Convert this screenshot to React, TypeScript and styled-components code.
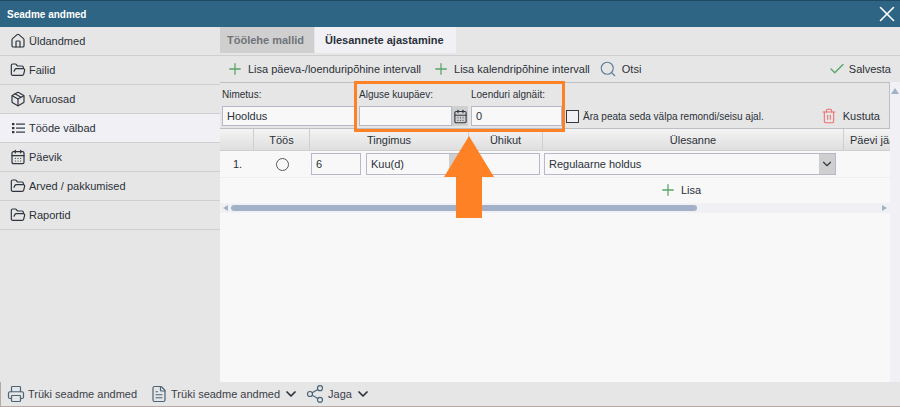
import React from 'react';
import styled, { createGlobalStyle } from 'styled-components';
import { CalendarDays, Check, ChevronDown, FileText, FolderOpen, House, Package, Plus, Printer, Search, Share2, Trash2, X } from 'lucide-react';

const GlobalStyle = createGlobalStyle`
  html, body { margin: 0; padding: 0; height: 100%; overflow: hidden; }
  body { font-family: "Liberation Sans", Arial, sans-serif; font-size: 11px; color: #2b3138; }
  * { box-sizing: border-box; }
`;

const ListIcon = ({ size }: { size: number; color?: string; strokeWidth?: number }) => (
  <svg width={size} height={size} viewBox='0 0 16 16' fill='#2f3640'>
    <rect x='2' y='3' width='2.4' height='2.2' />
    <rect x='2' y='7' width='2.4' height='2.2' />
    <rect x='2' y='11' width='2.4' height='2.2' />
    <rect x='6' y='3.5' width='9' height='1.2' />
    <rect x='6' y='7.5' width='9' height='1.2' />
    <rect x='6' y='11.5' width='9' height='1.2' />
  </svg>
);

const aMenu = [
  { sName: 'Üldandmed', oIcon: House },
  { sName: 'Failid', oIcon: FolderOpen },
  { sName: 'Varuosad', oIcon: Package },
  { sName: 'Tööde välbad', oIcon: ListIcon, bActive: true },
  { sName: 'Päevik', oIcon: CalendarDays },
  { sName: 'Arved / pakkumised', oIcon: FolderOpen },
  { sName: 'Raportid', oIcon: FolderOpen },
];

const App = () => {
  return (
    <Page>
      <GlobalStyle />
      <Header>
        <HeaderTitle>Seadme andmed</HeaderTitle>
        <X size={26} color='#ffffff' strokeWidth={1.5} />
      </Header>

      <Body>
        <Sidebar>
          {aMenu.map((oItem) => (
            <MenuItem key={oItem.sName} $active={oItem.bActive}>
              <oItem.oIcon size={16} color='#2f3640' strokeWidth={1.8} />
              {oItem.sName}
            </MenuItem>
          ))}
        </Sidebar>

        <Main>
          <Tabs>
            <Tab>Töölehe mallid</Tab>
            <Tab $active>Ülesannete ajastamine</Tab>
          </Tabs>

          <Toolbar>
            <ToolButton $spaced>
              <Plus size={18} color='#5aa469' strokeWidth={1.7} />
              Lisa päeva-/loenduripõhine intervall
            </ToolButton>
            <ToolButton>
              <Plus size={18} color='#5aa469' strokeWidth={1.7} />
              Lisa kalendripõhine intervall
            </ToolButton>
            <SearchButton>
              <Search size={18} color='#5f7f96' strokeWidth={1.5} />
              Otsi
            </SearchButton>
            <SaveButton>
              <Check size={18} color='#5aa469' strokeWidth={1.8} />
              Salvesta
            </SaveButton>
          </Toolbar>

          <Content>
            <ScrollArea>
              <FormPanel>
                <Field $width={134}>
                  <Label>Nimetus:</Label>
                  <Input>Hooldus</Input>
                </Field>
                <Field $width={109}>
                  <Label>Alguse kuupäev:</Label>
                  <DateInput>
                    <Input $grow />
                    <DateButton>
                      <CalendarDays size={15} color='#333a42' strokeWidth={1.8} />
                    </DateButton>
                  </DateInput>
                </Field>
                <Field $width={91}>
                  <Label>Loenduri algnäit:</Label>
                  <Input>0</Input>
                </Field>
                <CheckRow>
                  <CheckBox />
                  Ära peata seda välpa remondi/seisu ajal.
                </CheckRow>
                <DeleteButton>
                  <Trash2 size={16} color='#ee7070' strokeWidth={1.6} />
                  Kustuta
                </DeleteButton>
              </FormPanel>

              <TableClip>
                <HeadRow>
                  <HeadCell />
                  <HeadCell>Töös</HeadCell>
                  <HeadCell>Tingimus</HeadCell>
                  <HeadCell>Ühikut</HeadCell>
                  <HeadCell>Ülesanne</HeadCell>
                  <HeadCell $clip>Päevi jäänud</HeadCell>
                </HeadRow>
                <DataRow>
                  <RowNumber>1.</RowNumber>
                  <Cell>
                    <Radio />
                  </Cell>
                  <ConditionCell>
                    <CellInput $width={50}>6</CellInput>
                    <UnitSelect>
                      Kuu(d)
                      <SelectArrow />
                    </UnitSelect>
                  </ConditionCell>
                  <Cell>
                    <CellInput $width={68} />
                  </Cell>
                  <TaskCell>
                    <TaskSelect>
                      Regulaarne holdus
                      <SelectArrow>
                        <ChevronDown size={14} color='#333a42' strokeWidth={2} />
                      </SelectArrow>
                    </TaskSelect>
                  </TaskCell>
                  <Cell />
                </DataRow>
                <AddRow>
                  <Plus size={18} color='#5aa469' strokeWidth={1.7} />
                  Lisa
                </AddRow>
                <HScroll>
                  <ArrowLeft />
                  <HThumb />
                  <ArrowRight />
                </HScroll>
              </TableClip>
            </ScrollArea>
            <VScroll>
              <ArrowUp />
            </VScroll>
          </Content>
        </Main>
      </Body>

      <Footer>
        <FooterButton $spaced>
          <Printer size={18} color='#4a6478' strokeWidth={1.6} />
          Trüki seadme andmed
        </FooterButton>
        <FooterButton>
          <FileText size={18} color='#4a6478' strokeWidth={1.6} />
          Trüki seadme andmed
          <ChevronDown size={16} color='#2b3138' strokeWidth={2.6} />
        </FooterButton>
        <FooterButton>
          <Share2 size={20} color='#4a6478' strokeWidth={1.4} />
          Jaga
          <ChevronDown size={16} color='#2b3138' strokeWidth={2.6} />
        </FooterButton>
      </Footer>

      <Highlight />
      <BigArrow viewBox='0 0 50 82'>
        <polygon points='25,0 50,41 38,41 38,82 12,82 12,41 0,41' fill='#ff8125' />
      </BigArrow>
    </Page>
  );
};

const Page = styled.div`
  width: 900px;
  height: 407px;
  position: relative;
  display: flex;
  flex-direction: column;
  overflow: hidden;
  background: #e6e6e6;
`;

const Header = styled.div`
  height: 27px;
  flex: none;
  display: flex;
  align-items: center;
  justify-content: space-between;
  padding-left: 7px;
  background: #2e6484;
  border-top: 1px solid #20485f;
`;

const HeaderTitle = styled.div`
  font-size: 10px;
  font-weight: 700;
  color: #ffffff;
`;

const Body = styled.div`
  flex: 1;
  min-height: 0;
  display: flex;
`;

const Sidebar = styled.div`
  width: 220px;
  flex: none;
  background: #e6e6e6;
`;

const MenuItem = styled.div<{ $active?: boolean }>`
  height: 29px;
  display: flex;
  align-items: center;
  gap: 3px;
  padding-left: 10px;
  font-size: 11px;
  color: #2b3138;
  background: ${(props) => (props.$active ? '#f0f0f5' : '#e6e6e6')};
  border-bottom: 1px solid #cfcfcf;
`;

const Main = styled.div`
  flex: 1;
  min-width: 0;
  display: flex;
  flex-direction: column;
  background: #f8f8f8;
`;

const Tabs = styled.div`
  height: 29px;
  flex: none;
  display: flex;
  gap: 1px;
  padding-bottom: 2px;
  background: #e6e6e6;
  border-bottom: 1px solid #cfcfcf;
`;

const Tab = styled.div<{ $active?: boolean }>`
  display: flex;
  align-items: center;
  padding-left: ${(props) => (props.$active ? '10px' : '7px')};
  width: ${(props) => (props.$active ? '141px' : '94px')};
  font-size: 11px;
  font-weight: 700;
  white-space: nowrap;
  color: ${(props) => (props.$active ? '#2b3138' : '#707478')};
  background: ${(props) => (props.$active ? '#f0f0f5' : '#cfcfcf')};
`;

const Toolbar = styled.div`
  height: 26px;
  flex: none;
  display: flex;
  align-items: center;
  gap: 9px;
  padding: 0 9px 0 6px;
  background: #e6e6e6;
`;

const ToolButton = styled.div<{ $spaced?: boolean }>`
  display: flex;
  align-items: center;
  gap: 4px;
  margin-right: ${(props) => (props.$spaced ? '2px' : '0')};
  font-size: 11px;
  white-space: nowrap;
`;

const SearchButton = styled(ToolButton)`
  gap: 5px;
`;

const SaveButton = styled(ToolButton)`
  margin-left: auto;
  gap: 3px;
`;

const Content = styled.div`
  flex: 1;
  min-height: 0;
  display: flex;
`;

const ScrollArea = styled.div`
  width: 670px;
  flex: none;
`;

const VScroll = styled.div`
  flex: 1;
  background: #f0f0f5;
  padding-top: 4px;
  display: flex;
  justify-content: center;
`;

const ArrowUp = styled.div`
  width: 0;
  height: 0;
  border-left: 4px solid transparent;
  border-right: 4px solid transparent;
  border-bottom: 6px solid #a3b1c8;
  margin-top: 2px;
`;

const FormPanel = styled.div`
  height: 47px;
  display: flex;
  align-items: flex-end;
  gap: 3px;
  padding: 0 9px 2px 2px;
  background: #e6e6e6;
  border-top: 1px solid #bdbdc4;
  border-right: 1px solid #bdbdc4;
  border-bottom: 1px solid #bdbdc4;
`;

const Field = styled.div<{ $width: number }>`
  width: ${(props) => props.$width}px;
  flex: none;
  display: flex;
  flex-direction: column;
  gap: 5px;
`;

const Label = styled.div`
  font-size: 10px;
  line-height: 13px;
`;

const Input = styled.div<{ $grow?: boolean }>`
  height: 20px;
  ${(props) => (props.$grow ? 'flex: 1;' : '')}
  display: flex;
  align-items: center;
  padding: 0 4px;
  font-size: 11px;
  background: #f8f8f8;
  border: 1px solid #b8b8cc;
`;

const DateInput = styled.div`
  display: flex;
`;

const DateButton = styled.div`
  width: 16px;
  height: 20px;
  display: flex;
  align-items: center;
  justify-content: center;
  background: #cfcfcf;
`;

const CheckRow = styled.div`
  height: 20px;
  margin-left: 1px;
  display: flex;
  align-items: center;
  gap: 4px;
  font-size: 10px;
  white-space: nowrap;
`;

const CheckBox = styled.div`
  width: 13px;
  height: 13px;
  border: 1px solid #333a42;
  background: #f0f0f5;
`;

const DeleteButton = styled.div`
  height: 20px;
  margin-left: auto;
  display: flex;
  align-items: center;
  gap: 6px;
  font-size: 11px;
`;

const TableClip = styled.div`
  overflow: hidden;
`;

const aColumns = '34px 56px 159px 74px 301px 46px';

const HeadRow = styled.div`
  height: 22px;
  display: grid;
  grid-template-columns: ${aColumns};
  background: linear-gradient(#f4f4f4, #dedede);
  border-bottom: 1px solid #cfcfcf;
`;

const HeadCell = styled.div<{ $clip?: boolean }>`
  display: flex;
  align-items: center;
  justify-content: ${(props) => (props.$clip ? 'flex-start' : 'center')};
  padding-left: ${(props) => (props.$clip ? '6px' : '0')};
  overflow: hidden;
  white-space: nowrap;
  font-size: 11px;
  border-right: 1px solid #cfcfcf;

  &:last-child {
    border-right: none;
  }
`;

const DataRow = styled.div`
  height: 27px;
  display: grid;
  grid-template-columns: ${aColumns};
  background: #f8f8f8;
  border-bottom: 1px solid #eeeeee;
`;

const Cell = styled.div`
  display: flex;
  align-items: center;
  justify-content: center;
`;

const RowNumber = styled(Cell)`
  font-size: 11px;
  padding-left: 1px;
`;

const ConditionCell = styled(Cell)`
  justify-content: flex-start;
  gap: 5px;
  padding-left: 1px;
`;

const TaskCell = styled(Cell)`
  justify-content: flex-start;
  padding-left: 1px;
`;

const Radio = styled.div`
  width: 13px;
  height: 13px;
  border-radius: 50%;
  border: 1px solid #55595e;
  background: #f8f8f8;
`;

const CellInput = styled.div<{ $width: number }>`
  width: ${(props) => props.$width}px;
  flex: none;
  height: 22px;
  display: flex;
  align-items: center;
  padding: 0 4px;
  font-size: 11px;
  background: #f8f8f8;
  border: 1px solid #b8b8cc;
`;

const UnitSelect = styled.div`
  width: 100px;
  flex: none;
  height: 22px;
  display: flex;
  align-items: center;
  justify-content: space-between;
  padding-left: 4px;
  font-size: 11px;
  background: #f8f8f8;
  border: 1px solid #b8b8cc;
`;

const TaskSelect = styled.div`
  width: 292px;
  height: 22px;
  display: flex;
  align-items: center;
  justify-content: space-between;
  padding-left: 4px;
  font-size: 11px;
  background: #f8f8f8;
  border: 1px solid #b8b8cc;
`;

const SelectArrow = styled.div`
  width: 16px;
  height: 20px;
  display: flex;
  align-items: center;
  justify-content: center;
  background: #cfcfcf;
`;

const AddRow = styled.div`
  height: 25px;
  display: flex;
  align-items: center;
  justify-content: center;
  gap: 4px;
  padding: 0 0 1px 250px;
  font-size: 11px;
  background: #f8f8f8;
`;

const HScroll = styled.div`
  height: 10px;
  display: flex;
  align-items: center;
  padding: 0 3px;
  background: #f0f0f5;
`;

const HThumb = styled.div`
  width: 466px;
  height: 6px;
  margin-left: 3px;
  border-radius: 3px;
  background: #a3b1c8;
`;

const ArrowLeft = styled.div`
  width: 0;
  height: 0;
  border-top: 3px solid transparent;
  border-bottom: 3px solid transparent;
  border-right: 5px solid #a3b1c8;
`;

const ArrowRight = styled.div`
  width: 0;
  height: 0;
  margin-left: auto;
  border-top: 3px solid transparent;
  border-bottom: 3px solid transparent;
  border-left: 5px solid #a3b1c8;
`;

const Footer = styled.div`
  height: 25px;
  flex: none;
  display: flex;
  align-items: center;
  gap: 6px;
  padding-left: 6px;
  background: #e6e6e6;
  border-left: 1px solid #b5a9a5;
  border-bottom: 1px solid #b5a9a5;
`;

const FooterButton = styled.div<{ $spaced?: boolean }>`
  display: flex;
  align-items: center;
  gap: 3px;
  margin-right: ${(props) => (props.$spaced ? '7px' : '0')};
  font-size: 11px;
  color: #3a4046;
  white-space: nowrap;
`;

const Highlight = styled.div`
  position: absolute;
  left: 354px;
  top: 81px;
  width: 211px;
  height: 51px;
  border: 3px solid #ff8125;
`;

const BigArrow = styled.svg`
  position: absolute;
  left: 444px;
  top: 136px;
  width: 50px;
  height: 82px;
`;

export default App;
